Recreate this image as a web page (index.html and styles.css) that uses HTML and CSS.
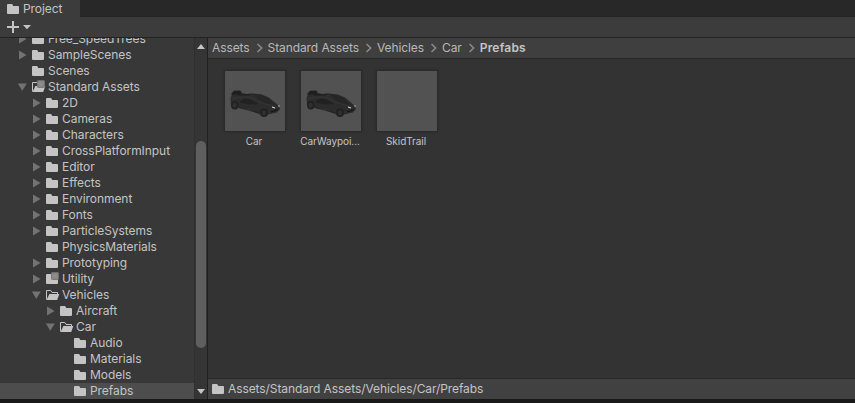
FILE: index.html
```
<!DOCTYPE html>
<html lang="en">
<head>
<meta charset="utf-8">
<title>Project</title>
<link rel="stylesheet" href="styles.css">
</head>
<body>
<svg class="defs" aria-hidden="true">
  <symbol id="folder" viewBox="0 0 14 12"><path d="M0 2Q0 1 1 1H4.6Q5.3 1 5.7 1.8L6.2 3H11Q12 3 12 4V10Q12 11 11 11H1Q0 11 0 10Z" fill="#c4c4c4"/></symbol>
  <symbol id="open" viewBox="0 0 14 12"><path d="M.5 10.5V1.5H4.8L6 3.5H11.5V5" fill="none" stroke="#c4c4c4"/><path d="M.5 11L3.4 5H13.3L11.2 11Z" fill="#c4c4c4"/></symbol>
  <symbol id="badge" viewBox="0 0 9 9"><rect x=".5" y=".5" width="8" height="8" rx="1" fill="#858585" stroke="#727272"/><path d="M2 3.5H7M2 5.5H7" stroke="#969696"/></symbol>
  <symbol id="right" viewBox="0 0 9 10"><path d="M1 .6L8.5 5L1 9.4Z" fill="#737373"/></symbol>
  <symbol id="down" viewBox="0 0 9 10"><path d="M-.2 1.5H8.8L4.3 8.8Z" fill="#737373"/></symbol>
  <symbol id="chev" viewBox="0 0 8 10"><path d="M1.5 1L5.7 5L1.5 9" fill="none" stroke="#8c8c8c" stroke-width="1.5"/></symbol>
  <symbol id="car" viewBox="0 0 60 60">
    <path d="M5.5 27L7 23L18 23.5L28 22.5L37 23.5L44 26.5L50 31.5L54 35L55 38L52 41.5L45 43L39 45L34 43L24 38.5L14 37L6 35Z" fill="#2c2c2c"/>
    <path d="M6 23L9 19.8L15 19.5L17 21.5L13 23L8 24Z" fill="#1f1f1f"/>
    <path d="M10 21.5L15 22L22 23L28 22.5L24 24.5L13 24.5Z" fill="#202020"/>
    <path d="M14 31.5L18 28L22 27.5L28 29.5L33 33L24 33.5Z" fill="#212121"/>
    <path d="M28 23L36 24L43 27L50 34L40 32L33 28Z" fill="#262626"/>
    <path d="M7 27.5L17 26L26 26.5L34 31L48 35" fill="none" stroke="#383838" stroke-width=".7"/>
    <path d="M14 36.5L34 42" stroke="#202020" stroke-width=".8"/>
    <ellipse cx="9.8" cy="34.3" rx="3.8" ry="4.2" fill="#222"/><ellipse cx="9.6" cy="34.3" rx="2" ry="2.5" fill="#303030"/>
    <ellipse cx="39" cy="41.8" rx="4" ry="4.2" fill="#212121"/><ellipse cx="39" cy="41.8" rx="2.1" ry="2.5" fill="#303030"/>
    <path d="M47 36L50 37" stroke="#ddd9cf" stroke-width="1.3"/><path d="M54 34V36" stroke="#c1a58e" stroke-width="1"/>
    <path d="M46 41L53 38.5" stroke="#151515" stroke-width="1.2"/>
  </symbol>
</svg>
<div class="window">
  <header class="tabs"><div class="tab"><svg class="icon"><use href="#folder"/></svg><span>Project</span></div></header>
  <div class="toolbar"><svg width="26" height="14" viewBox="0 0 26 14"><path d="M6 1V13M0 7H12" stroke="#c4c4c4" stroke-width="2"/><path d="M16 5H24L20 9.3Z" fill="#c4c4c4"/></svg></div>
  <div class="main">
    <nav class="tree">
      <div class="rows">
      <div class="row"><svg class="arrow"><use href="#right"/></svg><svg class="icon"><use href="#folder"/></svg><span>Free_SpeedTrees</span></div>
      <div class="row"><svg class="arrow"><use href="#right"/></svg><svg class="icon"><use href="#folder"/></svg><span>SampleScenes</span></div>
      <div class="row"><i class="arrow"></i><svg class="icon"><use href="#folder"/></svg><span>Scenes</span></div>
      <div class="row"><svg class="arrow"><use href="#down"/></svg><svg class="icon"><use href="#open"/><use href="#badge" x="5" y="-1" width="8" height="8"/></svg><span>Standard Assets</span></div>
      <div class="row l1"><svg class="arrow"><use href="#right"/></svg><svg class="icon"><use href="#folder"/></svg><span>2D</span></div>
      <div class="row l1"><svg class="arrow"><use href="#right"/></svg><svg class="icon"><use href="#folder"/></svg><span>Cameras</span></div>
      <div class="row l1"><svg class="arrow"><use href="#right"/></svg><svg class="icon"><use href="#folder"/></svg><span>Characters</span></div>
      <div class="row l1"><svg class="arrow"><use href="#right"/></svg><svg class="icon"><use href="#folder"/></svg><span>CrossPlatformInput</span></div>
      <div class="row l1"><svg class="arrow"><use href="#right"/></svg><svg class="icon"><use href="#folder"/></svg><span>Editor</span></div>
      <div class="row l1"><svg class="arrow"><use href="#right"/></svg><svg class="icon"><use href="#folder"/></svg><span>Effects</span></div>
      <div class="row l1"><svg class="arrow"><use href="#right"/></svg><svg class="icon"><use href="#folder"/></svg><span>Environment</span></div>
      <div class="row l1"><svg class="arrow"><use href="#right"/></svg><svg class="icon"><use href="#folder"/></svg><span>Fonts</span></div>
      <div class="row l1"><svg class="arrow"><use href="#right"/></svg><svg class="icon"><use href="#folder"/></svg><span>ParticleSystems</span></div>
      <div class="row l1"><i class="arrow"></i><svg class="icon"><use href="#folder"/></svg><span>PhysicsMaterials</span></div>
      <div class="row l1"><svg class="arrow"><use href="#right"/></svg><svg class="icon"><use href="#folder"/></svg><span>Prototyping</span></div>
      <div class="row l1"><svg class="arrow"><use href="#right"/></svg><svg class="icon"><use href="#folder"/><use href="#badge" x="5" y="-1" width="8" height="8"/></svg><span>Utility</span></div>
      <div class="row l1"><svg class="arrow"><use href="#down"/></svg><svg class="icon"><use href="#open"/></svg><span>Vehicles</span></div>
      <div class="row l2"><svg class="arrow"><use href="#right"/></svg><svg class="icon"><use href="#folder"/></svg><span>Aircraft</span></div>
      <div class="row l2"><svg class="arrow"><use href="#down"/></svg><svg class="icon"><use href="#open"/></svg><span>Car</span></div>
      <div class="row l3"><i class="arrow"></i><svg class="icon"><use href="#folder"/></svg><span>Audio</span></div>
      <div class="row l3"><i class="arrow"></i><svg class="icon"><use href="#folder"/></svg><span>Materials</span></div>
      <div class="row l3"><i class="arrow"></i><svg class="icon"><use href="#folder"/></svg><span>Models</span></div>
      <div class="row l3 selected"><i class="arrow"></i><svg class="icon"><use href="#folder"/></svg><span>Prefabs</span></div>
      </div>
    </nav>
    <div class="scroll">
      <svg width="8" height="5"><path d="M0 5L4 0L8 5Z" fill="#c4c4c4"/></svg>
      <div class="thumb"></div>
      <svg width="8" height="5"><path d="M0 0H8L4 5Z" fill="#c4c4c4"/></svg>
    </div>
    <section class="content">
      <div class="crumbs">
        <span>Assets</span><svg class="chev"><use href="#chev"/></svg><span>Standard Assets</span><svg class="chev"><use href="#chev"/></svg><span>Vehicles</span><svg class="chev"><use href="#chev"/></svg><span>Car</span><svg class="chev"><use href="#chev"/></svg><b>Prefabs</b>
      </div>
      <div class="grid">
        <div class="asset"><div class="preview"><svg><use href="#car"/></svg></div><span>Car</span></div>
        <div class="asset"><div class="preview"><svg><use href="#car"/></svg></div><span>CarWaypoi...</span></div>
        <div class="asset"><div class="preview"></div><span>SkidTrail</span></div>
      </div>
      <footer class="path"><svg class="icon"><use href="#folder"/></svg><span>Assets/Standard Assets/Vehicles/Car/Prefabs</span></footer>
    </section>
  </div>
</div>
</body>
</html>
```
FILE: styles.css
```
* { box-sizing: border-box; }
body { margin: 0; background: #191919; color: #c4c4c4; font: 12px/16px Inter, sans-serif; letter-spacing: -0.06px; overflow: hidden; }
svg { display: block; flex: none; }
span, b { white-space: nowrap; }
.defs { width: 0; height: 0; position: absolute; }
.window { height: 399px; display: flex; flex-direction: column; background: #383838; }
.tabs { height: 17px; flex: none; display: flex; background: #282828; border-bottom: 1px solid #232323; }
.tab { width: 80px; height: 17px; padding-left: 7px; display: flex; align-items: center; background: #3c3c3c; }
.icon { width: 14px; height: 12px; margin-right: 2px; overflow: visible; }
.toolbar { height: 21px; flex: none; padding: 3px 7px; background: #3c3c3c; border-bottom: 1px solid #232323; }
.main { flex: 1; min-height: 0; display: flex; }
.tree { width: 194px; flex: none; overflow: hidden; }
.rows { margin-top: -7px; }
.row { height: 16px; padding-left: 18px; display: flex; align-items: center; }
.l1 { padding-left: 32px; }
.l2 { padding-left: 46px; }
.l3 { padding-left: 60px; }
.selected { background: #4d4d4d; }
.arrow { width: 9px; height: 10px; flex: none; margin-right: 5px; }
.scroll { width: 14px; flex: none; padding: 6px 0 5px; display: flex; flex-direction: column; align-items: center; background: #353535; border-left: 1px solid #303030; border-right: 1px solid #202020; }
.thumb { width: 10px; height: 207px; margin: 92px 0 auto; border-radius: 5px; background: #5f5f5f; }
.content { flex: 1; min-width: 0; display: flex; flex-direction: column; background: #333; }
.crumbs { height: 21px; flex: none; padding-left: 4px; display: flex; align-items: center; background: #3f3f3f; border-bottom: 1px solid #282828; color: #b8b8b8; letter-spacing: -0.09px; }
.crumbs b { font-weight: 600; letter-spacing: 0.2px; color: #c4c4c4; }
.chev { width: 8px; height: 10px; margin: 0 4px 0 6px; }
.grid { flex: 1; display: flex; gap: 16px; padding: 12px 17px; }
.asset { width: 60px; display: flex; flex-direction: column; align-items: center; font-size: 10px; line-height: 14px; }
.asset span { margin-left: -2px; }
.preview { width: 60px; height: 60px; margin-bottom: 3px; background: #525252; box-shadow: 0 0 2px 1px #282828; }
.preview svg { width: 60px; height: 60px; }
.path { height: 21px; flex: none; padding-left: 4px; display: flex; align-items: center; background: #414141; border-top: 1px solid #282828; letter-spacing: -0.09px; }
```
